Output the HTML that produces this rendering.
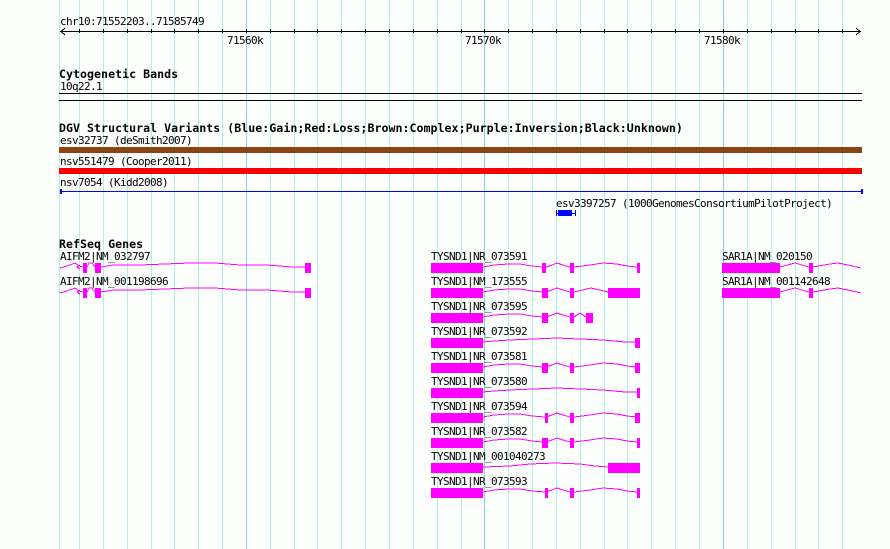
<!DOCTYPE html>
<html><head><meta charset="utf-8"><style>
html,body{margin:0;padding:0;background:#fdfffd}
svg{display:block}
text{font-family:"DejaVu Sans Mono","Liberation Mono",monospace;font-size:11px;letter-spacing:-.62px;fill:#000}
text.b{font-weight:bold;font-size:11.6px;letter-spacing:.03px}
.g line{stroke:#afeeee;stroke-width:1}
.c polyline{fill:none;stroke:#f0f;stroke-width:1}
.e{fill:#f0f}
</style></head><body>
<svg width="890" height="549" viewBox="0 0 890 549" xmlns="http://www.w3.org/2000/svg">
<g shape-rendering="crispEdges">
<rect width="890" height="549" fill="#fdfffd"/>
<g class="g">
<line x1="59.5" x2="59.5" y2="549"/><line x1="79.5" x2="79.5" y2="549"/><line x1="103.5" x2="103.5" y2="549"/><line x1="127.5" x2="127.5" y2="549"/><line x1="151.5" x2="151.5" y2="549"/><line x1="174.5" x2="174.5" y2="549"/><line x1="198.5" x2="198.5" y2="549"/><line x1="222.5" x2="222.5" y2="549"/><line x1="270.5" x2="270.5" y2="549"/><line x1="294.5" x2="294.5" y2="549"/><line x1="317.5" x2="317.5" y2="549"/><line x1="341.5" x2="341.5" y2="549"/><line x1="365.5" x2="365.5" y2="549"/><line x1="389.5" x2="389.5" y2="549"/><line x1="413.5" x2="413.5" y2="549"/><line x1="437.5" x2="437.5" y2="549"/><line x1="461.5" x2="461.5" y2="549"/><line x1="508.5" x2="508.5" y2="549"/><line x1="532.5" x2="532.5" y2="549"/><line x1="556.5" x2="556.5" y2="549"/><line x1="580.5" x2="580.5" y2="549"/><line x1="604.5" x2="604.5" y2="549"/><line x1="627.5" x2="627.5" y2="549"/><line x1="651.5" x2="651.5" y2="549"/><line x1="675.5" x2="675.5" y2="549"/><line x1="699.5" x2="699.5" y2="549"/><line x1="747.5" x2="747.5" y2="549"/><line x1="771.5" x2="771.5" y2="549"/><line x1="795.5" x2="795.5" y2="549"/><line x1="818.5" x2="818.5" y2="549"/><line x1="842.5" x2="842.5" y2="549"/>
</g>
<rect x="246" width="1" height="549" fill="#87ceeb"/><rect x="484" width="1" height="549" fill="#87ceeb"/><rect x="723" width="1" height="549" fill="#87ceeb"/>

<!-- ruler -->
<rect x="60" y="31" width="801" height="1" fill="#000"/>
<path d="M65 28L61 31.5L65 35M856 28L860 31.5L856 35" fill="none" stroke="#000"/>
<path fill="#000" d="M79 29h1v4h-1zM103 29h1v4h-1zM127 29h1v4h-1zM151 29h1v4h-1zM174 29h1v4h-1zM198 29h1v4h-1zM222 29h1v4h-1zM246 29h1v4h-1zM270 29h1v4h-1zM294 29h1v4h-1zM317 29h1v4h-1zM341 29h1v4h-1zM365 29h1v4h-1zM389 29h1v4h-1zM413 29h1v4h-1zM437 29h1v4h-1zM461 29h1v4h-1zM484 29h1v4h-1zM508 29h1v4h-1zM532 29h1v4h-1zM556 29h1v4h-1zM580 29h1v4h-1zM604 29h1v4h-1zM627 29h1v4h-1zM651 29h1v4h-1zM675 29h1v4h-1zM699 29h1v4h-1zM723 29h1v4h-1zM747 29h1v4h-1zM771 29h1v4h-1zM795 29h1v4h-1zM818 29h1v4h-1zM842 29h1v4h-1z"/>

<!-- cytoband -->
<rect x="59" y="93" width="803" height="1" fill="#000"/>
<rect x="59" y="100" width="803" height="1" fill="#000"/>

<!-- DGV -->
<rect x="59" y="147" width="803" height="6" fill="#8b4513"/>
<rect x="59" y="168" width="803" height="6" fill="#f00"/>
<rect x="60" y="191" width="802" height="1" fill="#00f"/>
<rect x="60" y="189" width="2" height="5" fill="#00f"/>
<rect x="861" y="189" width="2" height="5" fill="#00f"/>
<rect x="556" y="213" width="20" height="1" fill="#00f"/>
<rect x="556" y="210" width="1" height="6" fill="#00f"/>
<rect x="575" y="210" width="1" height="6" fill="#00f"/>
<rect x="558" y="210" width="14" height="6" fill="#00f"/>
</g>

<g class="c" shape-rendering="crispEdges">
<defs>
<g id="a"><polyline points="483,4 494,2 509,1 520,1 532,3 542,4"/></g>
<g id="a2"><polyline points="483,4 494,2 509,1 520,1 532,3 545,4"/></g>
<g id="m"><polyline points="546,4 552,2 557,0 563,2 570,4"/></g>
<g id="t"><polyline points="574,4 590,2 603,0 617,1 627,3 637,4"/></g>
<g id="l"><polyline points="483,4 494,3 510,2 533,1 557,0 580,1 603,2 625,4 637,4"/></g>
<g id="ai"><polyline points="60,5 70,2 75,0 79,3 83,4"/><polyline points="87,4 89,0 92,0 95,4"/><polyline points="101,4 113,2 139,2 165,1 190,0 215,0 240,2 267,2 292,4 305,4"/><polyline points="80,2 77,4 80,6"/></g>
<g id="sa"><polyline points="780,4 795,0 802,2 809,4"/><polyline points="813,4 830,1 838,0 848,2 861,5"/></g>
</defs>
<use href="#ai" y="263"/><use href="#ai" y="288"/>
<use href="#sa" y="263"/><use href="#sa" y="288"/>
<use href="#a" y="263"/><use href="#m" y="263"/><use href="#t" y="263"/>
<use href="#a" y="288"/><use href="#m" y="288"/><polyline points="574,292 591,288 608,292"/>
<use href="#a" y="313"/><use href="#m" y="313"/><polyline points="574,317 580,313 586,317"/>
<use href="#l" y="338"/>
<use href="#a" y="363"/><use href="#m" y="363"/><use href="#t" y="363"/>
<use href="#l" y="388"/>
<use href="#a2" y="413"/><use href="#m" y="413"/><use href="#t" y="413"/>
<use href="#a" y="438"/><use href="#m" y="438"/><use href="#t" y="438"/>
<polyline points="483,467 510,466 530,464 555,463 580,464 595,466 608,467"/>
<use href="#a2" y="488"/><use href="#m" y="488"/><use href="#t" y="488"/>
</g>

<g class="e" shape-rendering="crispEdges">
<rect x="83" y="263" width="4" height="10"/><rect x="95" y="263" width="6" height="10"/><rect x="305" y="263" width="6" height="10"/>
<rect x="83" y="288" width="4" height="10"/><rect x="95" y="288" width="6" height="10"/><rect x="305" y="288" width="6" height="10"/>
<rect x="722" y="263" width="58" height="10"/><rect x="809" y="263" width="4" height="10"/>
<rect x="722" y="288" width="58" height="10"/><rect x="809" y="288" width="4" height="10"/>

<rect x="431" y="263" width="52" height="10"/><rect x="542" y="263" width="4" height="10"/><rect x="570" y="263" width="4" height="10"/><rect x="637" y="263" width="3" height="10"/>
<rect x="431" y="288" width="52" height="10"/><rect x="542" y="288" width="6" height="10"/><rect x="570" y="288" width="4" height="10"/><rect x="608" y="288" width="32" height="10"/>
<rect x="431" y="313" width="52" height="10"/><rect x="542" y="313" width="6" height="10"/><rect x="570" y="313" width="4" height="10"/><rect x="586" y="313" width="7" height="10"/>
<rect x="431" y="338" width="52" height="10"/><rect x="635" y="338" width="5" height="10"/>
<rect x="431" y="363" width="52" height="10"/><rect x="542" y="363" width="6" height="10"/><rect x="570" y="363" width="4" height="10"/><rect x="635" y="363" width="5" height="10"/>
<rect x="431" y="388" width="52" height="10"/><rect x="637" y="388" width="3" height="10"/>
<rect x="431" y="413" width="52" height="10"/><rect x="545" y="413" width="3" height="10"/><rect x="570" y="413" width="4" height="10"/><rect x="635" y="413" width="5" height="10"/>
<rect x="431" y="438" width="52" height="10"/><rect x="542" y="438" width="6" height="10"/><rect x="570" y="438" width="4" height="10"/><rect x="637" y="438" width="3" height="10"/>
<rect x="431" y="463" width="52" height="10"/><rect x="608" y="463" width="32" height="10"/>
<rect x="431" y="488" width="52" height="10"/><rect x="545" y="488" width="3" height="10"/><rect x="570" y="488" width="4" height="10"/><rect x="637" y="488" width="3" height="10"/>
</g>

<text x="60" y="25">chr10:71552203..71585749</text>
<text x="227" y="44">71560k</text>
<text x="465" y="44">71570k</text>
<text x="704" y="44">71580k</text>
<text x="59" y="78" class="b">Cytogenetic Bands</text>
<text x="60" y="90">10q22.1</text>
<text x="59" y="132" class="b">DGV Structural Variants (Blue:Gain;Red:Loss;Brown:Complex;Purple:Inversion;Black:Unknown)</text>
<text x="60" y="144">esv32737 (deSmith2007)</text>
<text x="60" y="165">nsv551479 (Cooper2011)</text>
<text x="60" y="186">nsv7054 (Kidd2008)</text>
<text x="556" y="207">esv3397257 (1000GenomesConsortiumPilotProject)</text>
<text x="59" y="248" class="b">RefSeq Genes</text>
<text x="60" y="260">AIFM2|NM_032797</text>
<text x="60" y="285">AIFM2|NM_001198696</text>
<text x="431" y="260">TYSND1|NR_073591</text>
<text x="431" y="285">TYSND1|NM_173555</text>
<text x="431" y="310">TYSND1|NR_073595</text>
<text x="431" y="335">TYSND1|NR_073592</text>
<text x="431" y="360">TYSND1|NR_073581</text>
<text x="431" y="385">TYSND1|NR_073580</text>
<text x="431" y="410">TYSND1|NR_073594</text>
<text x="431" y="435">TYSND1|NR_073582</text>
<text x="431" y="460">TYSND1|NM_001040273</text>
<text x="431" y="485">TYSND1|NR_073593</text>
<text x="722" y="260">SAR1A|NM_020150</text>
<text x="722" y="285">SAR1A|NM_001142648</text>
</svg>
</body></html>
